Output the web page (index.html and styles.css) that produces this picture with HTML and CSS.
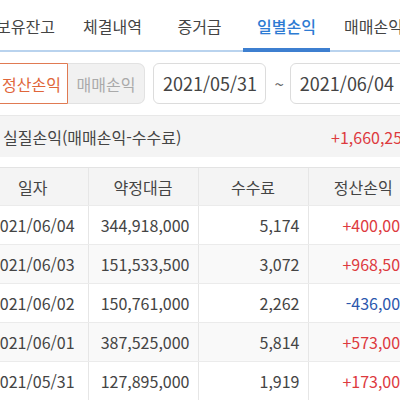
FILE: index.html
```html
<!DOCTYPE html>
<html lang="ko">
<head>
<meta charset="utf-8">
<link rel="stylesheet" href="styles.css">
</head>
<body>
<div class="page">
  <nav class="tabs">
    <div class="tab">보유잔고</div>
    <div class="tab">체결내역</div>
    <div class="tab">증거금</div>
    <div class="tab active">일별손익</div>
    <div class="tab">매매손익</div>
  </nav>
  <div class="filters">
    <div class="seg">
      <button class="seg-btn on">정산손익</button>
      <button class="seg-btn off">매매손익</button>
    </div>
    <div class="date">2021/05/31</div>
    <span class="tilde">~</span>
    <div class="date">2021/06/04</div>
  </div>
  <div class="summary">
    <span class="sum-label">실질손익(매매손익-수수료)</span>
    <span class="sum-value up">+1,660,259</span>
  </div>
  <table class="grid">
    <thead>
      <tr><th>일자</th><th>약정대금</th><th>수수료</th><th>정산손익</th></tr>
    </thead>
    <tbody>
      <tr><td class="c">2021/06/04</td><td>344,918,000</td><td>5,174</td><td class="up">+400,000</td></tr>
      <tr class="alt"><td class="c">2021/06/03</td><td>151,533,500</td><td>3,072</td><td class="up">+968,500</td></tr>
      <tr><td class="c">2021/06/02</td><td>150,761,000</td><td>2,262</td><td class="down">-436,000</td></tr>
      <tr class="alt"><td class="c">2021/06/01</td><td>387,525,000</td><td>5,814</td><td class="up">+573,000</td></tr>
      <tr><td class="c">2021/05/31</td><td>127,895,000</td><td>1,919</td><td class="up">+173,000</td></tr>
    </tbody>
  </table>
</div>
</body>
</html>
```

FILE: styles.css
```css
* { box-sizing: border-box; }
html, body { margin: 0; padding: 0; background: #fff; }
body {
  font-family: "Noto Sans CJK KR", "Noto Sans", sans-serif;
  color: #444;
  overflow: hidden;
  width: 400px;
  height: 400px;
}
.page { width: 440px; margin-left: -22px; }

.tabs {
  display: flex;
  height: 52px;
  border-bottom: 2px solid #b9d3ee;
  margin-left: 4px;
}
.tab {
  position: relative;
  width: 87px;
  flex: none;
  text-align: center;
  font-size: 16px;
  line-height: 52px;
  height: 50px;
  color: #444;
}
.tab.active { color: #2d7bd3; font-weight: 500; }
.tab.active::after {
  content: "";
  position: absolute;
  left: 0; right: 0; bottom: -2px;
  height: 4px;
  background: #3d7fd0;
}

.filters {
  display: flex;
  align-items: center;
  margin-top: 11px;
  margin-left: 13px;
  height: 41px;
}
.seg { display: flex; height: 41px; }
.seg-btn {
  font-family: inherit;
  font-size: 16px;
  width: 77px;
  height: 41px;
  padding: 0;
  margin: 0;
  background: #fff;
}
.seg-btn.on {
  border: 1.5px solid #e07a52;
  color: #e0663a;
  border-radius: 6px 0 0 6px;
  padding-left: 4px;
}
.seg-btn.off {
  border: 1px solid #e2e2e2;
  border-left: none;
  background: #f1f1f1;
  color: #aaa;
  border-radius: 0 7px 7px 0;
}
.date {
  height: 41px;
  width: 115px;
  border: 1px solid #dcdcdc;
  border-radius: 6px;
  margin-left: 8px;
  padding-left: 9px;
  font-size: 18px;
  line-height: 39px;
  color: #444;
}
.tilde { margin: 0 6px 0 8px; font-size: 17px; color: #666; }
.tilde + .date { margin-left: 0; width: 130px; }

.summary {
  display: flex;
  justify-content: space-between;
  align-items: center;
  margin-top: 11px;
  height: 42px;
  background: #f4f4f4;
  border-top: 1px solid #e8e8e8;
  padding: 0 7px 0 25px;
  font-size: 16px;
}
.sum-label { color: #444; }
.sum-value { font-size: 16px; }

.grid {
  margin-top: 10px;
  border-collapse: collapse;
  width: 440px;
  table-layout: fixed;
  font-size: 16px;
}
.grid th, .grid td {
  width: 110px;
  border-left: 1px solid #e6e6e6;
  border-bottom: 1px solid #ebebeb;
  padding: 0 8px;
  white-space: nowrap;
}
.grid th:first-child, .grid td:first-child { border-left: none; }
.grid th {
  height: 38px;
  background: #f4f4f4;
  border-top: 1px solid #e3e3e3;
  font-weight: 400;
  font-size: 16px;
  color: #444;
  text-align: center;
}
.grid td { height: 39px; text-align: right; color: #444; }
.grid td.c { text-align: center; }
.grid td:last-child { padding-right: 9px; }
.grid tr.alt td { background: #f9f9f9; }
.up { color: #dd3a3e; }
.down { color: #2b57ad; }
.grid td.up { color: #dd3a3e; }
.grid td.down { color: #2b57ad; }
```
